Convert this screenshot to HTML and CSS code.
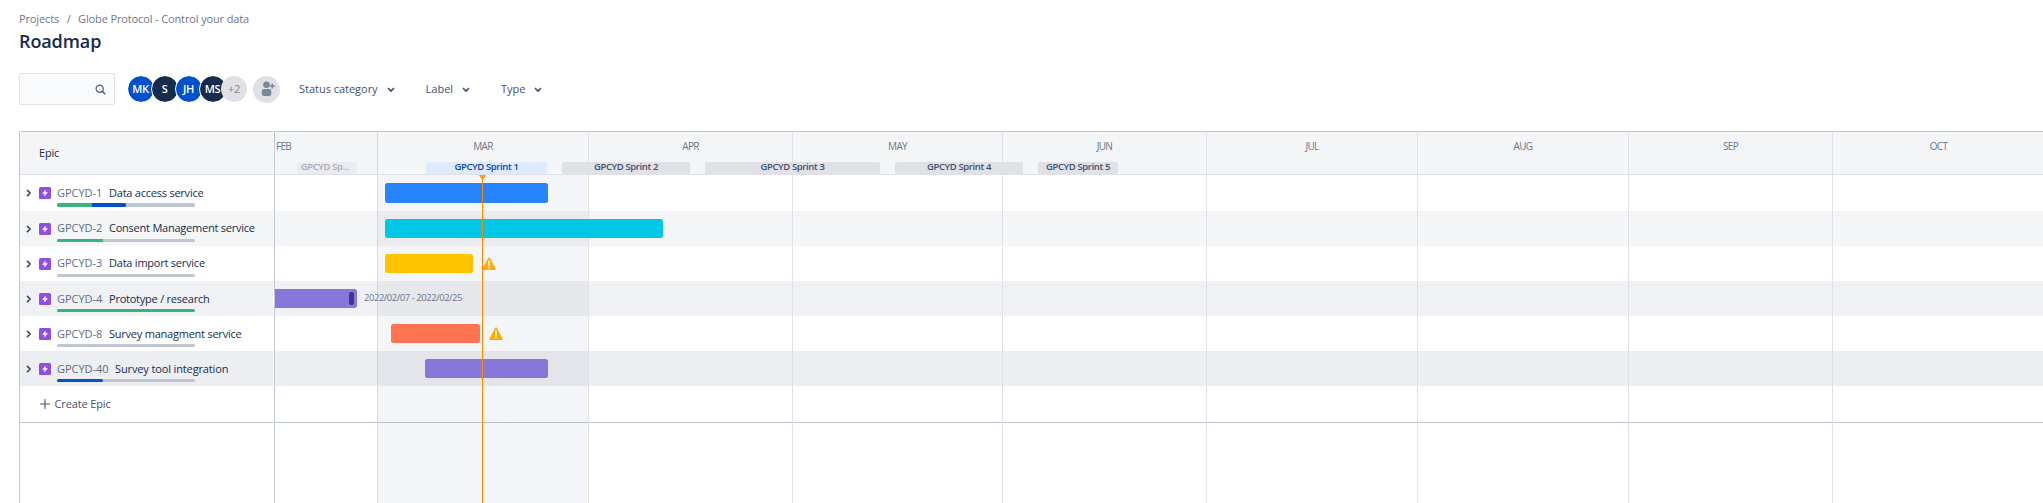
FILE: index.html
```html
<!DOCTYPE html>
<html lang="en">
<head>
<meta charset="utf-8">
<title>Roadmap</title>
<link rel="stylesheet" href="styles.css">
</head>
<body>
<svg class="sprite" aria-hidden="true">
  <symbol id="chevron-down" viewBox="0 0 8 6"><path d="M1.5 1.5 4 4.1 6.5 1.5" fill="none" stroke="currentColor" stroke-width="1.7" stroke-linecap="round" stroke-linejoin="round"/></symbol>
  <symbol id="chevron-right" viewBox="0 0 6 8"><path d="M1.5 1.4 4.2 4 1.5 6.6" fill="none" stroke="currentColor" stroke-width="1.6" stroke-linecap="round" stroke-linejoin="round"/></symbol>
  <symbol id="epic" viewBox="0 0 12 12"><rect width="12" height="12" rx="1.5" fill="#904ee2"/><path d="M6.6 2.4v2.9h2.3L5.4 9.6V6.7H3.1z" fill="#fff"/></symbol>
  <symbol id="warning" viewBox="0 0 14 13"><path d="M7 .8 13.2 12.3H.8z" fill="#ffab00" stroke="#ffab00" stroke-width="1.2" stroke-linejoin="round"/><path d="M7 4.3v4" stroke="#fff" stroke-width="1.5" stroke-linecap="round"/><circle cx="7" cy="10.5" r=".9" fill="#fff"/></symbol>
</svg>

<header class="page-head">
  <nav class="crumbs"><span>Projects</span><span class="slash">/</span><span>Globe Protocol - Control your data</span></nav>
  <h1 class="title">Roadmap</h1>
  <div class="toolbar">
    <div class="search">
      <svg class="search-icon" viewBox="0 0 11 11"><circle cx="4.7" cy="4.7" r="3.6" fill="none" stroke="currentColor" stroke-width="1.2"/><path d="M7.4 7.4 9.8 9.8" stroke="currentColor" stroke-width="1.5" stroke-linecap="round"/></svg>
    </div>
    <div class="avatars">
      <span class="avatar blue">MK</span><span class="avatar navy">S</span><span class="avatar blue">JH</span><span class="avatar navy">MS</span><span class="avatar more">+2</span>
    </div>
    <span class="add-person">
      <svg class="person-icon" viewBox="0 0 14 16"><circle cx="5.5" cy="3.8" r="3.3" fill="currentColor"/><path d="M.8 9.9Q.8 8.1 2.6 8.1h5.9q1.8 0 1.8 1.8v2.9q0 2.3-2.3 2.3H3.1Q.8 15.1.8 12.8z" fill="currentColor"/><path d="M11.3 2.5v5M8.8 5h5" stroke="currentColor" stroke-width="1.6"/></svg>
    </span>
    <div class="filters">
      <span class="filter">Status category<svg class="down"><use href="#chevron-down"/></svg></span>
      <span class="filter">Label<svg class="down"><use href="#chevron-down"/></svg></span>
      <span class="filter">Type<svg class="down"><use href="#chevron-down"/></svg></span>
    </div>
  </div>
</header>

<main class="board">
  <section class="epics">
    <div class="epics-head">Epic</div>
    <div class="epic tall"><svg class="right"><use href="#chevron-right"/></svg><svg class="type"><use href="#epic"/></svg><div class="body"><div class="line"><span class="key">GPCYD-1</span><span class="name">Data access service</span></div><div class="progress"><i class="done" style="width:35px"></i><i class="doing" style="width:34px"></i></div></div></div>
    <div class="epic shade-a"><svg class="right"><use href="#chevron-right"/></svg><svg class="type"><use href="#epic"/></svg><div class="body"><div class="line"><span class="key">GPCYD-2</span><span class="name">Consent Management service</span></div><div class="progress"><i class="done" style="width:46px"></i></div></div></div>
    <div class="epic"><svg class="right"><use href="#chevron-right"/></svg><svg class="type"><use href="#epic"/></svg><div class="body"><div class="line"><span class="key">GPCYD-3</span><span class="name">Data import service</span></div><div class="progress"></div></div></div>
    <div class="epic shade-b"><svg class="right"><use href="#chevron-right"/></svg><svg class="type"><use href="#epic"/></svg><div class="body"><div class="line low"><span class="key">GPCYD-4</span><span class="name">Prototype / research</span></div><div class="progress"><i class="done" style="width:138px"></i></div></div></div>
    <div class="epic"><svg class="right"><use href="#chevron-right"/></svg><svg class="type"><use href="#epic"/></svg><div class="body"><div class="line low"><span class="key">GPCYD-8</span><span class="name">Survey managment service</span></div><div class="progress"></div></div></div>
    <div class="epic shade-c"><svg class="right"><use href="#chevron-right"/></svg><svg class="type"><use href="#epic"/></svg><div class="body"><div class="line low"><span class="key wide">GPCYD-40</span><span class="name loose">Survey tool integration</span></div><div class="progress"><i class="doing" style="width:46px"></i></div></div></div>
    <div class="create"><svg class="plus" viewBox="0 0 10 10"><path d="M5 .5v9M.5 5h9" stroke="currentColor" stroke-width="1.1" stroke-linecap="round"/></svg>Create Epic</div>
  </section>

  <section class="timeline">
    <div class="months">
      <div class="month first">FEB</div><div class="month current">MAR</div><div class="month">APR</div><div class="month">MAY</div><div class="month">JUN</div><div class="month">JUL</div><div class="month">AUG</div><div class="month">SEP</div><div class="month">OCT</div>
    </div>
    <div class="time-head">
      <span class="sprint past" style="margin-left:22px;width:60px">GPCYD Sp...</span>
      <span class="sprint active" style="margin-left:69px;width:121px">GPCYD Sprint 1</span>
      <span class="sprint" style="margin-left:15px;width:128px">GPCYD Sprint 2</span>
      <span class="sprint" style="margin-left:15px;width:175px">GPCYD Sprint 3</span>
      <span class="sprint" style="margin-left:15px;width:128px">GPCYD Sprint 4</span>
      <span class="sprint" style="margin-left:15px;width:80px">GPCYD Sprint 5</span>
    </div>
    <div class="row tall"><div class="bar c-blue" style="margin-left:110px;width:163px"></div></div>
    <div class="row shade-a"><div class="bar c-teal" style="margin-left:110px;width:278px"></div></div>
    <div class="row"><div class="bar c-yellow" style="margin-left:110px;width:88px"></div><svg class="warn"><use href="#warning"/></svg></div>
    <div class="row shade-b"><div class="bar c-purple clipped" style="width:82px"><i class="handle"></i></div><span class="dates">2022/02/07 - 2022/02/25</span></div>
    <div class="row"><div class="bar c-orange" style="margin-left:116px;width:89px"></div><svg class="warn"><use href="#warning"/></svg></div>
    <div class="row shade-c"><div class="bar c-purple" style="margin-left:150px;width:123px"></div></div>
    <div class="row last"></div>
    <div class="today"><svg class="marker" viewBox="0 0 7 6"><path d="M0 0h7L3.5 6z" fill="#ff991f"/></svg></div>
  </section>
</main>
</body>
</html>
```
FILE: styles.css
```css
* { box-sizing: border-box; }

body {
  margin: 0;
  height: 503px;
  overflow: hidden;
  display: flex;
  flex-direction: column;
  background: #fff;
  color: #172b4d;
  font: 11px/14px "Open Sans", "Noto Sans", sans-serif;
}

.sprite { display: none; }
svg { display: block; flex: none; }

/* Page header */
.page-head {
  height: 131px;
  flex: none;
  padding: 12px 0 0 19px;
}
.crumbs {
  display: flex;
  color: #6b778c;
  letter-spacing: -0.13px;
}
.slash { width: 19px; text-align: center; }
.title {
  margin: 3px 0 0;
  font-size: 18px;
  line-height: 24px;
  font-weight: 540;
  letter-spacing: -0.1px;
}
.toolbar {
  display: flex;
  align-items: center;
  height: 32px;
  margin-top: 20px;
}
.search {
  display: flex;
  align-items: center;
  justify-content: flex-end;
  width: 96px;
  height: 32px;
  padding-right: 8px;
  border: 1px solid #dfe1e6;
  border-radius: 2px;
  background: #fafbfc;
}
.search-icon { width: 11px; height: 11px; color: #505f79; }
.avatars { display: flex; margin-left: 11.5px; }
.avatar {
  display: flex;
  align-items: center;
  justify-content: center;
  width: 28px;
  height: 28px;
  margin-right: -4px;
  border: 1.5px solid #fff;
  border-radius: 50%;
  color: #fff;
  font-weight: 600;
  line-height: 12px;
  letter-spacing: -0.3px;
}
.blue { background: #0052cc; background-clip: padding-box; }
.navy { background: #172b4d; background-clip: padding-box; }
.more {
  margin: 0 0 0 -1.5px;
  border: 0;
  width: 26px;
  height: 26px;
  align-self: center;
  background: #dfe1e6;
  color: #7a869a;
  font-weight: 400;
}
.add-person {
  display: flex;
  align-items: center;
  justify-content: center;
  width: 27px;
  height: 27px;
  margin-left: 6px;
  border-radius: 50%;
  background: #dfe1e6;
  color: #7a869a;
}
.person-icon { width: 14px; height: 16px; margin-left: 2px; }
.filters { display: flex; gap: 31px; margin-left: 19px; color: #42526e; }
.filter { display: flex; align-items: center; gap: 9px; letter-spacing: -0.02px; }
.down { width: 8px; height: 6px; margin-top: 1px; }

/* Board */
.board {
  flex: 1;
  display: grid;
  grid-template-columns: 254px 1fr;
  gap: 1px;
  margin-left: 19px;
  min-height: 0;
}
.epics {
  border-top: 1px solid #c1c7d0;
  border-left: 1px solid #c1c7d0;
  border-top-left-radius: 2px;
}
.epics-head {
  display: flex;
  align-items: center;
  height: 43px;
  padding: 0 0 1px 19px;
  border-bottom: 1px solid #dfe1e6;
  background: #f4f5f7;
  letter-spacing: -0.2px;
}
.epic {
  display: flex;
  height: 35px;
  padding-left: 6px;
}
.epic.tall, .row.tall { height: 36px; }
.shade-a { background: #f4f5f7; }
.shade-b { background: #f0f1f4; }
.shade-c { background: #edeef2; }
.right { width: 6px; height: 8px; margin-top: 14px; color: #344563; }
.type { width: 12px; height: 12px; margin: 11.5px 6.5px 0 6.5px; }
.tall .type { margin-top: 12px; }
.body { padding-top: 10px; }
.tall .body { padding-top: 11px; }
.line { display: flex; height: 14px; white-space: nowrap; }
.line.low { padding-top: 1px; }
.key { width: 52px; color: #5e6c84; letter-spacing: -0.05px; }
.key.wide { width: 58px; }
.name { letter-spacing: -0.23px; }
.name.loose { letter-spacing: -0.13px; }
.progress {
  display: flex;
  width: 138px;
  height: 3px;
  margin-top: 4px;
  border-radius: 1.5px;
  background: #c1c7d0;
  overflow: hidden;
}
.tall .progress { height: 4px; margin-top: 3px; }
.done { background: #36b37e; }
.doing { background: #0052cc; border-radius: 0 1.5px 1.5px 0; }
.create {
  display: flex;
  align-items: center;
  gap: 5px;
  height: 37px;
  padding-left: 19.5px;
  border-bottom: 1px solid #c1c7d0;
  color: #42526e;
  letter-spacing: -0.14px;
}
.plus { width: 10px; height: 10px; }

/* Timeline */
.timeline {
  position: relative;
  border-top: 1px solid #c1c7d0;
  border-left: 1px solid #c1c7d0;
  min-width: 0;
}
.months {
  position: absolute;
  inset: 0;
  z-index: 1;
  display: grid;
  grid-template-columns: 103px 211px 204px 210px 204px 211px 211px 204px 211px;
}
.month {
  padding-top: 7px;
  border-right: 1px solid #dfe1e6;
  color: #6b778c;
  font-size: 10px;
  letter-spacing: -0.7px;
  text-align: center;
}
.month.first { text-align: left; padding-left: 1px; border-color: #d3d6dc; }
.month:last-child { border-right: 0; }
.current {
  background: linear-gradient(rgba(9, 30, 66, 0.045), rgba(9, 30, 66, 0.045)) 0 43px no-repeat;
}
.time-head {
  display: flex;
  align-items: flex-end;
  height: 43px;
  border-bottom: 1px solid #dfe1e6;
  background: #f4f5f7;
}
.sprint {
  position: relative;
  z-index: 2;
  flex: none;
  height: 12px;
  border-radius: 2px;
  background: #dfe1e6;
  color: #42526e;
  font-size: 9.5px;
  line-height: 10px;
  font-weight: 600;
  letter-spacing: -0.38px;
  text-align: center;
  white-space: nowrap;
}
.past { background: #ebecf0; color: #a5adba; padding-right: 4px; }
.active { background: #deebff; color: #0747a6; }
.row { display: flex; height: 35px; padding-top: 8px; }
.row.last { height: 37px; border-bottom: 1px solid #c1c7d0; }
.bar {
  position: relative;
  z-index: 2;
  flex: none;
  height: 19px;
  border-radius: 2.5px;
}
.tall .bar { height: 20px; }
.clipped {
  display: flex;
  align-items: center;
  justify-content: flex-end;
  padding-right: 3px;
  border-radius: 0 2.5px 2.5px 0;
}
.handle { width: 5px; height: 13px; border-radius: 2px; background: #403294; }
.c-blue { background: #2684ff; }
.c-teal { background: #00c7e6; }
.c-yellow { background: #ffc400; }
.c-purple { background: #8777d9; }
.c-orange { background: #ff7452; }
.warn { position: relative; z-index: 4; width: 14px; height: 13px; margin: 3px 0 0 9px; }
.dates {
  position: relative;
  z-index: 2;
  margin: 2px 0 0 7px;
  color: #6b778c;
  font-size: 9.5px;
  letter-spacing: -0.47px;
}
.today {
  position: absolute;
  z-index: 3;
  top: 43px;
  bottom: 0;
  left: 207px;
  width: 1px;
  background: #ff8b00;
}
.marker { width: 7px; height: 6px; margin-left: -3px; }
```
